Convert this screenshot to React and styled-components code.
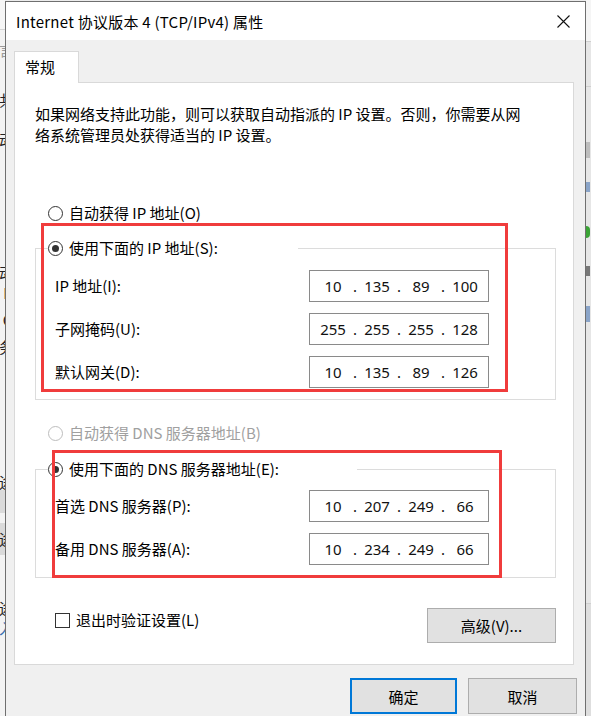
import React from "react";
import styled, { createGlobalStyle } from "styled-components";

const Global = createGlobalStyle`
  html, body { margin: 0; padding: 0; }
  body {
    background: #e9e9e9;
    font-family: "Noto Sans CJK SC", "Noto Sans", sans-serif;
    color: #000;
  }
`;

const FONT = `"Noto Sans CJK SC", "Noto Sans", sans-serif`;

const Screen = styled.div`
  width: 591px;
  height: 716px;
  display: flex;
  overflow: hidden;
  background: #ececec;
`;

const LeftEdge = styled.div`
  width: 5px;
  flex: none;
  display: flex;
  flex-direction: column;
  overflow: hidden;
  background: #f3f3f3;
`;

const EdgeCell = styled.div`
  height: ${(p) => p.$h}px;
  flex: none;
  display: flex;
  align-items: center;
  justify-content: flex-end;
  overflow: hidden;
  background: ${(p) => p.$bg || "transparent"};
  border-bottom: ${(p) => (p.$line ? "1px solid #d4d4d4" : "none")};
  box-sizing: border-box;
  font-family: ${FONT};
  font-size: 15px;
  line-height: 18px;
  color: ${(p) => p.$c || "#222"};
  white-space: nowrap;
`;

const Glyph = styled.span`
  display: block;
  margin-right: -9px;
`;

const RightEdge = styled.div`
  width: 5px;
  flex: none;
  display: flex;
  flex-direction: column;
  background: #e6e6e6;
`;

const RightCell = styled.div`
  height: ${(p) => p.$h}px;
  flex: none;
  display: flex;
  align-items: center;
  background: ${(p) => p.$bg || "transparent"};
  border-bottom: ${(p) => (p.$line ? "1px solid #cfcfcf" : "none")};
  box-sizing: border-box;
`;

const Dot = styled.span`
  display: block;
  width: 4px;
  height: ${(p) => p.$h || 8}px;
  background: ${(p) => p.$c};
  border-radius: ${(p) => (p.$round ? "0 4px 4px 0" : "0")};
`;

const Dialog = styled.div`
  width: 581px;
  flex: none;
  margin-top: 1px;
  box-sizing: border-box;
  border: 1px solid #6f6f6f;
  border-bottom: none;
  background: #f0f0f0;
  display: flex;
  flex-direction: column;
`;

const TitleBar = styled.div`
  height: 38px;
  flex: none;
  background: #fff;
  display: flex;
  align-items: center;
  justify-content: space-between;
  padding: 0 15px 0 10px;
  font-family: ${FONT};
  font-size: 15px;
  letter-spacing: 0.25px;
  color: #000;
`;

const CloseBtn = styled.div`
  width: 14px;
  height: 14px;
  display: flex;
  align-items: center;
  justify-content: center;
`;

const Body = styled.div`
  padding: 11px 0 0 8px;
  display: flex;
  flex-direction: column;
`;

const Tabs = styled.div`
  display: flex;
  position: relative;
  z-index: 1;
  margin-bottom: -1px;
`;

const Tab = styled.div`
  width: 65px;
  height: 32px;
  box-sizing: border-box;
  background: #fff;
  border: 1px solid #d9d9d9;
  border-bottom: none;
  padding: 5px 0 0 10px;
  font-family: ${FONT};
  font-size: 15px;
  line-height: 20px;
`;

const Panel = styled.div`
  position: relative;
  height: 583px;
  margin-right: 11px;
  box-sizing: border-box;
  background: #fff;
  border: 1px solid #d9d9d9;
  padding: 20px 17px 0 20px;
  display: flex;
  flex-direction: column;
  font-family: ${FONT};
  font-size: 15px;
`;

const Intro = styled.p`
  margin: 0;
  line-height: 21px;
  white-space: nowrap;
`;

const OptionRow = styled.label`
  display: flex;
  align-items: center;
  gap: 6px;
  height: 20px;
  margin: ${(p) => p.$m || "0"};
  padding-left: ${(p) => p.$pl || 0}px;
  color: ${(p) => (p.$disabled ? "#a0a0a0" : "#000")};
  line-height: 20px;
  white-space: nowrap;
  box-sizing: border-box;
`;

const Radio = styled.span`
  width: 15px;
  height: 15px;
  flex: none;
  box-sizing: border-box;
  border-radius: 50%;
  border: 1px solid ${(p) => (p.$disabled ? "#bdbdbd" : "#333")};
  background: #fff;
  display: flex;
  align-items: center;
  justify-content: center;
  &::after {
    content: "";
    display: ${(p) => (p.$checked ? "block" : "none")};
    width: 7px;
    height: 7px;
    border-radius: 50%;
    background: #333;
  }
`;

const CheckBox = styled.span`
  width: 15px;
  height: 15px;
  flex: none;
  box-sizing: border-box;
  border: 1px solid #333;
  background: #fff;
`;

const Group = styled.fieldset`
  margin: ${(p) => p.$m};
  padding: ${(p) => p.$pt}px 0 ${(p) => p.$pb}px 0;
  border: 1px solid #dcdcdc;
  min-inline-size: 0;
  display: flex;
  flex-direction: column;
  gap: 11px;
`;

const Legend = styled.legend`
  width: ${(p) => p.$w}px;
  margin-left: 12px;
  padding: 0;
  background: #fff;
`;

const FieldRow = styled.div`
  display: grid;
  grid-template-columns: 254px 180px;
  align-items: center;
  padding-left: 19px;
  line-height: 20px;
`;

const IpBox = styled.div`
  width: 180px;
  height: 32px;
  box-sizing: border-box;
  border: 1px solid #8a8a8a;
  background: #fff;
  display: flex;
  align-items: center;
  padding-left: 5px;
  font-family: "Noto Sans", ${FONT};
  font-size: 15px;
  color: #111;
`;

const Octet = styled.span`
  width: 36px;
  text-align: center;
`;

const Sep = styled.span`
  width: 8px;
  text-align: center;
`;

const BottomRow = styled.div`
  display: flex;
  justify-content: space-between;
  align-items: flex-start;
  margin-top: 30px;
`;

const Button = styled.button`
  width: ${(p) => p.$w}px;
  height: ${(p) => p.$h}px;
  box-sizing: border-box;
  background: #e1e1e1;
  border: ${(p) => (p.$default ? "2px solid #0078d7" : "1px solid #adadad")};
  font-family: ${FONT};
  font-size: 15px;
  color: #000;
  padding: 0;
  margin: 0;
`;

const Footer = styled.div`
  display: flex;
  justify-content: flex-end;
  gap: 11px;
  margin-top: 13px;
  padding-right: 8px;
`;

const Mark = styled.div`
  position: absolute;
  left: ${(p) => p.$x}px;
  top: ${(p) => p.$y}px;
  width: ${(p) => p.$w}px;
  height: ${(p) => p.$h}px;
  box-sizing: border-box;
  border: 3px solid #f03c3c;
  pointer-events: none;
  z-index: 2;
`;

function Ip({ parts }) {
  return (
    <IpBox>
      {parts.map((p, i) => (
        <React.Fragment key={i}>
          {i > 0 && <Sep>.</Sep>}
          <Octet>{p}</Octet>
        </React.Fragment>
      ))}
    </IpBox>
  );
}

const leftCells = [
  { h: 30, line: true, g: "", bg: "#f6f6f6" },
  { h: 10, g: "" },
  { h: 20, g: "言", c: "#9a9a9a" },
  { h: 30, g: "" },
  { h: 20, g: "共" },
  { h: 20, g: "" },
  { h: 20, g: "动" },
  { h: 22, g: "" },
  { h: 20, g: "e" },
  { h: 71, g: "" },
  { h: 20, g: "动" },
  { h: 20, g: "N" },
  { h: 7, g: "" },
  { h: 20, g: "Q" },
  { h: 7, g: "" },
  { h: 20, g: "务" },
  { h: 6, g: "" },
  { h: 20, g: "r", c: "#8a1a1a" },
  { h: 17, g: "" },
  { h: 20, g: "V", c: "#2a5a9a" },
  { h: 7, g: "" },
  { h: 20, g: "V", c: "#2a5a9a" },
  { h: 3, g: "" },
  { h: 20, g: "r", c: "#8a1a1a" },
  { h: 3, g: "" },
  { h: 17, g: "途" },
  { h: 23, g: "", bg: "#dadada" },
  { h: 10, g: "" },
  { h: 32, g: "途", bg: "#dadada" },
  { h: 43, g: "" },
  { h: 20, g: "途" },
  { h: 20, g: "入", c: "#3a6fb0" },
  { h: 78, g: "" },
];

const rightCells = [
  { h: 42, bg: "#f5f5f5", line: true },
  { h: 45, line: true },
  { h: 53 },
  { h: 20, dot: "#bdbdbd" },
  { h: 20 },
  { h: 14, dot: "#8aa4c8" },
  { h: 30 },
  { h: 16, dot: "#3aa335", round: true },
  { h: 24 },
  { h: 14, dot: "#777" },
  { h: 26 },
  { h: 20, dot: "#8aa4c8" },
  { h: 280, line: true },
  { h: 112, bg: "#dedede" },
];

export default function App() {
  return (
    <Screen>
      <Global />
      <LeftEdge>
        {leftCells.map((c, i) => (
          <EdgeCell key={i} $h={c.h} $line={c.line} $bg={c.bg} $c={c.c}>
            <Glyph>{c.g}</Glyph>
          </EdgeCell>
        ))}
      </LeftEdge>

      <Dialog>
        <TitleBar>
          <span>Internet 协议版本 4 (TCP/IPv4) 属性</span>
          <CloseBtn>
            <svg width="13" height="13" viewBox="0 0 13 13">
              <path d="M0.5 0.5 L12.5 12.5 M12.5 0.5 L0.5 12.5" stroke="#111" strokeWidth="1.1" fill="none" />
            </svg>
          </CloseBtn>
        </TitleBar>

        <Body>
          <Tabs>
            <Tab>常规</Tab>
          </Tabs>
          <Panel>
            <Intro>
              如果网络支持此功能，则可以获取自动指派的 IP 设置。否则，你需要从网
              <br />
              络系统管理员处获得适当的 IP 设置。
            </Intro>

            <OptionRow $m="58px 0 0 0" $pl={13}>
              <Radio />
              自动获得 IP 地址(O)
            </OptionRow>

            <Group $m="15px 0 0 0" $pt={12} $pb={11}>
              <Legend $w={250}>
                <OptionRow>
                  <Radio $checked />
                  使用下面的 IP 地址(S):
                </OptionRow>
              </Legend>
              <FieldRow>
                <span>IP 地址(I):</span>
                <Ip parts={["10", "135", "89", "100"]} />
              </FieldRow>
              <FieldRow>
                <span>子网掩码(U):</span>
                <Ip parts={["255", "255", "255", "128"]} />
              </FieldRow>
              <FieldRow>
                <span>默认网关(D):</span>
                <Ip parts={["10", "135", "89", "126"]} />
              </FieldRow>
            </Group>

            <OptionRow $m="23px 0 0 0" $pl={13} $disabled>
              <Radio $disabled />
              自动获得 DNS 服务器地址(B)
            </OptionRow>

            <Group $m="16px 0 0 0" $pt={11} $pb={12}>
              <Legend $w={309}>
                <OptionRow>
                  <Radio $checked />
                  使用下面的 DNS 服务器地址(E):
                </OptionRow>
              </Legend>
              <FieldRow>
                <span>首选 DNS 服务器(P):</span>
                <Ip parts={["10", "207", "249", "66"]} />
              </FieldRow>
              <FieldRow>
                <span>备用 DNS 服务器(A):</span>
                <Ip parts={["10", "234", "249", "66"]} />
              </FieldRow>
            </Group>

            <BottomRow>
              <OptionRow $m="2px 0 0 0" $pl={20}>
                <CheckBox />
                退出时验证设置(L)
              </OptionRow>
              <Button $w={129} $h={35}>高级(V)...</Button>
            </BottomRow>

            <Mark $x={26} $y={140} $w={467} $h={169} />
            <Mark $x={37} $y={367} $w={450} $h={128} />
          </Panel>

          <Footer>
            <Button $w={107} $h={36} $default>确定</Button>
            <Button $w={109} $h={36}>取消</Button>
          </Footer>
        </Body>
      </Dialog>

      <RightEdge>
        {rightCells.map((c, i) => (
          <RightCell key={i} $h={c.h} $bg={c.bg} $line={c.line}>
            {c.dot && <Dot $c={c.dot} $h={c.h - 4} $round={c.round} />}
          </RightCell>
        ))}
      </RightEdge>
    </Screen>
  );
}
